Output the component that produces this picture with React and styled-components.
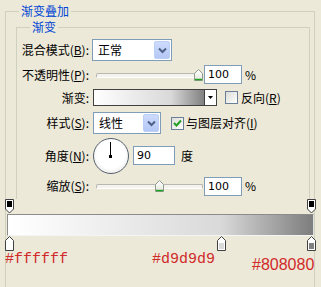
import React from 'react';
import styled, { createGlobalStyle } from 'styled-components';

const GlobalStyle = createGlobalStyle`
  html, body {
    margin: 0;
    padding: 0;
    background: #ece9d8;
    overflow: hidden;
  }
  body {
    font-family: "Noto Sans CJK SC", "Liberation Sans", sans-serif;
    font-size: 12px;
    color: #000;
  }
`;

const Page = styled.div`
  width: 321px;
  height: 287px;
  padding-top: 4px;
  box-sizing: border-box;
  overflow: hidden;
`;

const Group = styled.fieldset`
  margin: ${(p) => (p.$inner ? '2px 4px 0 10px' : '0 0 0 5px')};
  padding: ${(p) => (p.$inner ? '4px 0 0 0' : '0')};
  width: ${(p) => (p.$inner ? 'auto' : '310px')};
  height: ${(p) => (p.$inner ? 'auto' : '300px')};
  min-width: 0;
  box-sizing: border-box;
  border: 1px solid #d0d0bf;
  border-bottom: none;
`;

const Legend = styled.legend`
  margin-left: 13px;
  padding: 0 2px;
  line-height: 14px;
  font-size: 12px;
  color: #0046d5;
`;

const Row = styled.div`
  display: flex;
  align-items: center;
  height: ${(p) => p.$h}px;
`;

const Label = styled.span`
  width: 72px;
  flex-shrink: 0;
  text-align: right;
  line-height: 14px;
  white-space: nowrap;
`;

const Text = styled.span`
  margin-left: ${(p) => p.$ml || 0}px;
  line-height: 14px;
  white-space: nowrap;
`;

const SelectBox = styled.div`
  display: flex;
  align-items: stretch;
  margin-left: ${(p) => p.$ml}px;
  width: ${(p) => p.$w}px;
  height: 22px;
  box-sizing: border-box;
  border: 1px solid #7f9db9;
  background: #fff;
`;

const SelectValue = styled.span`
  flex: 1;
  padding-left: 5px;
  line-height: 20px;
`;

const SelectButton = styled.span`
  width: 16px;
  margin: 1px;
  display: flex;
  align-items: center;
  justify-content: center;
  border-radius: 2px;
  background: linear-gradient(#cddbfc, #b4c8f6);
  border: 1px solid #bccff7;
  box-sizing: border-box;
`;

const SliderWrap = styled.div`
  position: relative;
  margin-left: ${(p) => p.$ml}px;
  width: ${(p) => p.$w}px;
  height: 14px;
  flex-shrink: 0;
`;

const SliderTrack = styled.div`
  position: absolute;
  left: 0;
  right: 0;
  top: 5px;
  height: 3px;
  border-radius: 2px;
  border: 1px solid #b8b8b0;
  border-bottom-color: #fff;
  background: #f4f3ee;
`;

const Thumb = styled.svg`
  position: absolute;
  top: 1px;
`;

const NumInput = styled.div`
  margin-left: ${(p) => p.$ml}px;
  width: ${(p) => p.$w}px;
  height: 19px;
  box-sizing: border-box;
  border: 1px solid #7f9db9;
  background: #fff;
  padding-left: 3px;
  font-family: "DejaVu Sans", "Liberation Sans", sans-serif;
  font-size: 11px;
  line-height: 17px;
  flex-shrink: 0;
`;

const GradientPicker = styled.div`
  display: flex;
  margin-left: 4px;
  height: 17px;
`;

const GradientSwatch = styled.div`
  width: 112px;
  box-sizing: border-box;
  border: 1px solid #404040;
  background: linear-gradient(to right, #ffffff, #d9d9d9 70%, #808080);
`;

const GradientArrow = styled.div`
  width: 12px;
  box-sizing: border-box;
  border: 1px solid #404040;
  border-left: none;
  background: #fff;
  display: flex;
  align-items: center;
  justify-content: center;
`;

const Check = styled.div`
  margin-left: ${(p) => p.$ml}px;
  width: 13px;
  height: 13px;
  box-sizing: border-box;
  border: 1px solid #6b7f99;
  background: linear-gradient(135deg, #dcdcd7, #ffffff);
  display: flex;
  align-items: center;
  justify-content: center;
  flex-shrink: 0;
`;

const Dial = styled.div`
  position: relative;
  margin-left: 4px;
  width: 36px;
  height: 36px;
  box-sizing: border-box;
  border-radius: 50%;
  border: 1px solid #55606e;
  background: radial-gradient(circle at 50% 45%, #ffffff 55%, #d8d8d4 100%);
  flex-shrink: 0;
`;

const Needle = styled.div`
  position: absolute;
  left: 16px;
  top: 3px;
  width: 1px;
  height: 14px;
  background: #000;
`;

const Hub = styled.div`
  position: absolute;
  left: 15px;
  top: 16px;
  width: 3px;
  height: 3px;
  background: #000;
`;

const Strip = styled.div`
  display: flex;
  flex-direction: column;
`;

const StopTrack = styled.div`
  position: relative;
  height: 15px;
`;

const Stop = styled.svg`
  position: absolute;
  left: ${(p) => p.$x}px;
  top: 0;
`;

const Bar = styled.div`
  margin-left: 1px;
  width: 307px;
  height: 22px;
  box-sizing: border-box;
  border: 1px solid #8c8c8c;
  border-right-color: #e0e0e0;
  border-bottom-color: #f4f4f4;
  background: linear-gradient(to right, #ffffff 1%, #d9d9d9 70%, #808080 99%);
`;

const Notes = styled.div`
  position: relative;
  height: 40px;
`;

const Note = styled.span`
  position: absolute;
  left: ${(p) => p.$x}px;
  top: ${(p) => p.$y}px;
  color: #d12a2a;
  font-family: ${(p) => (p.$sans ? '"Liberation Sans", Arial, sans-serif' : '"Liberation Mono", "Courier New", monospace')};
  font-size: ${(p) => (p.$sans ? 16 : 15)}px;
  line-height: 18px;
  white-space: nowrap;
`;

const Chevron = () => (
  <svg width="9" height="7" viewBox="0 0 9 7">
    <path d="M1 1.5 L4.5 5 L8 1.5" fill="none" stroke="#4d6185" strokeWidth="2" />
  </svg>
);

const Slider = ({ width, pct }) => (
  <SliderWrap $ml={7} $w={width}>
    <SliderTrack />
    <Thumb width="9" height="12" viewBox="0 0 9 12" style={{ left: Math.round(pct * (width - 9)) }}>
      <defs>
        <linearGradient id="tg" x1="0" y1="0" x2="0" y2="1">
          <stop offset="0" stopColor="#ffffff" />
          <stop offset="1" stopColor="#e6e6de" />
        </linearGradient>
      </defs>
      <path d="M4.5 0.5 L8.5 4.5 L8.5 11.5 L0.5 11.5 L0.5 4.5 Z" fill="url(#tg)" stroke="#8d9a8d" />
      <path d="M1 10.5 H8" stroke="#21a121" strokeWidth="1.5" />
    </Thumb>
  </SliderWrap>
);

const TopStop = ({ x }) => (
  <Stop $x={x} width="9" height="15" viewBox="0 0 9 15">
    <path d="M0.5 0.5 H8.5 V10 L4.5 14 L0.5 10 Z" fill="#fff" stroke="#404040" />
    <rect x="2" y="2" width="5" height="6" fill="#000" />
  </Stop>
);

const BottomStop = ({ x, color }) => (
  <Stop $x={x} width="9" height="15" viewBox="0 0 9 15">
    <path d="M4.5 0.5 L8.5 4.5 V14.5 H0.5 V4.5 Z" fill="#fff" stroke="#404040" />
    <rect x="2" y="7" width="5" height="6" fill={color} />
  </Stop>
);

export default function App() {
  return (
    <Page>
      <GlobalStyle />
      <Group>
        <Legend>渐变叠加</Legend>
        <Group $inner>
          <Legend>渐变</Legend>
          <Row $h={24}>
            <Label>混合模式(<u>B</u>):</Label>
            <SelectBox $ml={3} $w={80}>
              <SelectValue>正常</SelectValue>
              <SelectButton><Chevron /></SelectButton>
            </SelectBox>
          </Row>
          <Row $h={25}>
            <Label>不透明性(<u>P</u>):</Label>
            <Slider width={107} pct={1} />
            <NumInput $ml={1} $w={38}>100</NumInput>
            <Text $ml={3}>%</Text>
          </Row>
          <Row $h={21}>
            <Label>渐变:</Label>
            <GradientPicker>
              <GradientSwatch />
              <GradientArrow>
                <svg width="5" height="3" viewBox="0 0 5 3">
                  <path d="M0 0 H5 L2.5 3 Z" fill="#000" />
                </svg>
              </GradientArrow>
            </GradientPicker>
            <Check $ml={8} />
            <Text $ml={3}>反向(<u>R</u>)</Text>
          </Row>
          <Row $h={30}>
            <Label>样式(<u>S</u>):</Label>
            <SelectBox $ml={4} $w={68}>
              <SelectValue>线性</SelectValue>
              <SelectButton><Chevron /></SelectButton>
            </SelectBox>
            <Check $ml={10}>
              <svg width="9" height="8" viewBox="0 0 9 8">
                <path d="M1 4 L3.5 6.5 L8 1.5" fill="none" stroke="#21a121" strokeWidth="2" />
              </svg>
            </Check>
            <Text $ml={2}>与图层对齐(<u>I</u>)</Text>
          </Row>
          <Row $h={35}>
            <Label>角度(<u>N</u>):</Label>
            <Dial>
              <Needle />
              <Hub />
            </Dial>
            <NumInput $ml={4} $w={42}>90</NumInput>
            <Text $ml={6}>度</Text>
          </Row>
          <Row $h={26}>
            <Label>缩放(<u>S</u>):</Label>
            <Slider width={107} pct={0.6} />
            <NumInput $ml={1} $w={38}>100</NumInput>
            <Text $ml={3}>%</Text>
          </Row>
        </Group>
        <Strip>
          <StopTrack>
            <TopStop x={-1} />
            <TopStop x={301} />
          </StopTrack>
          <Bar />
          <StopTrack>
            <BottomStop x={-1} color="#ffffff" />
            <BottomStop x={211} color="#d9d9d9" />
            <BottomStop x={301} color="#808080" />
          </StopTrack>
          <Notes>
            <Note $x={-1} $y={0}>#ffffff</Note>
            <Note $x={146} $y={0}>#d9d9d9</Note>
            <Note $x={246} $y={5} $sans>#808080</Note>
          </Notes>
        </Strip>
      </Group>
    </Page>
  );
}
